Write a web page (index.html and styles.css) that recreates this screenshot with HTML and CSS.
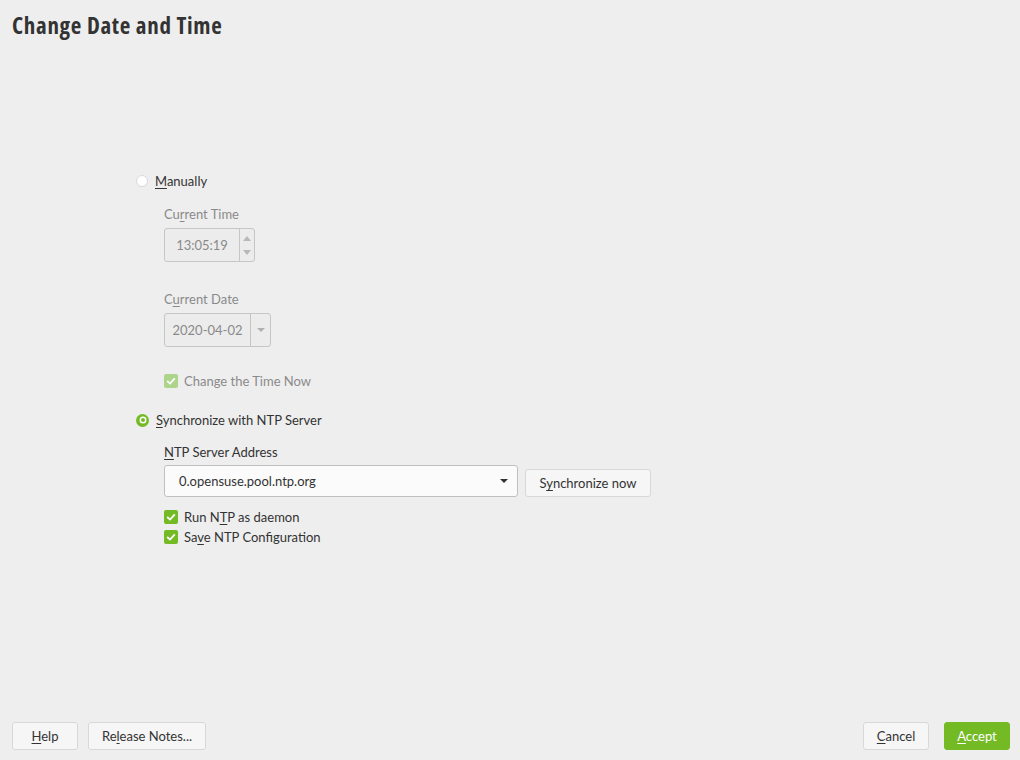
FILE: index.html
```html
<!DOCTYPE html>
<html>
<head>
<meta charset="utf-8">
<link rel="stylesheet" href="styles.css">
</head>
<body>
<div class="page">
  <h1 class="title">Change Date and Time</h1>
  <div class="main">
    <div class="radio-row">
      <span class="radio"></span>
      <span class="label"><u>M</u>anually</span>
    </div>
    <div class="indent">
      <div class="field-label disabled">Cu<u>r</u>rent Time</div>
      <div class="spin">
        <span class="spin-text">13:05:19</span>
        <span class="spin-btns">
          <svg width="14" height="32" viewBox="0 0 14 32"><path d="M3 12 L7 7 L11 12 Z" fill="#b8b8b8"/><path d="M3 21 L7 26 L11 21 Z" fill="#b8b8b8"/></svg>
        </span>
      </div>
      <div class="field-label disabled gap-date">C<u>u</u>rrent Date</div>
      <div class="datecombo">
        <span class="date-text">2020-04-02</span>
        <span class="date-btn"><svg width="10" height="6" viewBox="0 0 10 6"><path d="M1 1 L5 5 L9 1 Z" fill="#b0b0b0"/></svg></span>
      </div>
      <div class="check-row disabled gap-change">
        <span class="check check-disabled"><svg width="10" height="8" viewBox="0 0 10 8"><path d="M1.2 4 L4 6.6 L8.8 1.4" fill="none" stroke="#fff" stroke-width="1.8"/></svg></span>
        <span class="label">Change the Time Now</span>
      </div>
    </div>
    <div class="radio-row gap-sync">
      <span class="radio radio-on"><span class="radio-dot"></span></span>
      <span class="label"><u>S</u>ynchronize with NTP Server</span>
    </div>
    <div class="indent">
      <div class="field-label gap-ntp"><u>N</u>TP Server Address</div>
      <div class="ntp-row">
        <div class="combo">
          <span>0.opensuse.pool.ntp.org</span>
          <svg width="10" height="6" viewBox="0 0 10 6"><path d="M1 1 L5 5 L9 1 Z" fill="#333"/></svg>
        </div>
        <button class="btn btn-sync">S<u>y</u>nchronize now</button>
      </div>
      <div class="checks">
        <div class="check-row">
          <span class="check"><svg width="10" height="8" viewBox="0 0 10 8"><path d="M1.2 4 L4 6.6 L8.8 1.4" fill="none" stroke="#fff" stroke-width="1.8"/></svg></span>
          <span class="label">Run N<u>T</u>P as daemon</span>
        </div>
        <div class="check-row">
          <span class="check"><svg width="10" height="8" viewBox="0 0 10 8"><path d="M1.2 4 L4 6.6 L8.8 1.4" fill="none" stroke="#fff" stroke-width="1.8"/></svg></span>
          <span class="label">Sa<u>v</u>e NTP Configuration</span>
        </div>
      </div>
    </div>
  </div>
  <div class="footer">
    <div class="footer-left">
      <button class="btn btn-help"><u>H</u>elp</button>
      <button class="btn btn-notes">Re<u>l</u>ease Notes...</button>
    </div>
    <div class="footer-right">
      <button class="btn btn-cancel"><u>C</u>ancel</button>
      <button class="btn btn-accept"><u>A</u>ccept</button>
    </div>
  </div>
</div>
</body>
</html>
```
FILE: styles.css
```css
html, body {
  margin: 0;
  padding: 0;
  background: #eeeeee;
}
body {
  font-family: Lato, "Noto Sans", sans-serif;
  font-size: 13px;
  color: #333333;
}
u {
  text-decoration: underline;
  text-underline-offset: 2px;
}
.page {
  width: 1020px;
  height: 760px;
  display: flex;
  flex-direction: column;
}
.title {
  margin: 0;
  padding: 10px 0 0 12px;
  height: 30px;
  font-family: "Open Sans", "DejaVu Sans Condensed", sans-serif;
  font-stretch: condensed;
  font-weight: 700;
  font-size: 23px;
  line-height: 30px;
  color: #333;
  letter-spacing: 0.7px;
}
.main {
  flex: 1;
  padding: 133px 0 0 136px;
}
.radio-row {
  display: flex;
  align-items: center;
  height: 16px;
}
.radio {
  width: 12px;
  height: 12px;
  border-radius: 50%;
  background: #ffffff;
  border: 1px solid #d8d8e2;
  box-sizing: border-box;
  margin-right: 7px;
  display: flex;
  align-items: center;
  justify-content: center;
}
.radio-on {
  width: 13px;
  height: 13px;
  background: #73ba25;
  border: none;
}
.radio-dot {
  width: 4px;
  height: 4px;
  border-radius: 50%;
  background: #73ba25;
  box-shadow: 0 0 0 1.5px #ffffff;
}
.label {
  line-height: 16px;
}
.indent {
  margin-left: 28px;
}
.field-label {
  margin-top: 17px;
  line-height: 16px;
  height: 16px;
}
.disabled {
  color: #8a8a8a;
}
.spin {
  margin-top: 6px;
  width: 91px;
  height: 34px;
  box-sizing: border-box;
  border: 1px solid #c6c6c6;
  border-radius: 3px;
  display: flex;
  background: #ececec;
}
.spin-text {
  width: 75px;
  display: flex;
  align-items: center;
  justify-content: center;
  color: #8a8a8a;
  border-right: 1px solid #c6c6c6;
}
.spin-btns {
  flex: 1;
  display: flex;
  align-items: center;
  justify-content: center;
}
.gap-date {
  margin-top: 29px;
}
.datecombo {
  margin-top: 6px;
  width: 107px;
  height: 34px;
  box-sizing: border-box;
  border: 1px solid #c6c6c6;
  border-radius: 3px;
  display: flex;
  background: #ececec;
}
.date-text {
  width: 85px;
  display: flex;
  align-items: center;
  justify-content: center;
  color: #8a8a8a;
  border-right: 1px solid #c6c6c6;
}
.date-btn {
  flex: 1;
  display: flex;
  align-items: center;
  justify-content: center;
}
.check-row {
  display: flex;
  align-items: center;
  height: 20px;
}
.gap-change {
  margin-top: 26px;
  height: 16px;
}
.check {
  width: 14px;
  height: 14px;
  border-radius: 2px;
  background: #73ba25;
  display: flex;
  align-items: center;
  justify-content: center;
  margin-right: 6px;
}
.check-disabled {
  background: #acd48a;
}
.gap-sync {
  margin-top: 23px;
}
.gap-ntp {
  margin-top: 16px;
}
.ntp-row {
  margin-top: 5px;
  display: flex;
  align-items: flex-end;
  gap: 7px;
}
.combo {
  width: 354px;
  height: 32px;
  box-sizing: border-box;
  border: 1px solid #c0c0c0;
  border-radius: 3px;
  background: #fbfbfb;
  display: flex;
  align-items: center;
  justify-content: space-between;
  padding: 0 8px 0 14px;
}
.btn {
  font-family: inherit;
  font-size: 13px;
  color: #333;
  background: #f6f6f6;
  border: 1px solid #d8d8d8;
  border-radius: 3px;
  height: 28px;
  padding: 0;
  box-sizing: border-box;
}
.btn-sync {
  width: 126px;
}
.checks {
  margin-top: 10px;
}
.footer {
  display: flex;
  justify-content: space-between;
  padding: 0 10px 10px 12px;
}
.footer-left, .footer-right {
  display: flex;
  gap: 10px;
}
.footer-right {
  gap: 15px;
}
.btn-help { width: 66px; }
.btn-notes { width: 118px; }
.btn-cancel { width: 66px; }
.btn-accept {
  width: 66px;
  background: #73ba25;
  border-color: #73ba25;
  color: #ffffff;
}
```
